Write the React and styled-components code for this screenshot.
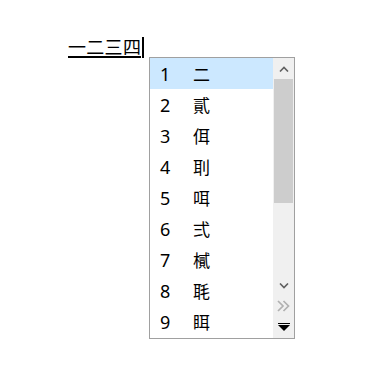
import React from 'react';
import styled, { createGlobalStyle } from 'styled-components';

const Global = createGlobalStyle`
	html, body {
		margin: 0;
		padding: 0;
		background: #fff;
	}
	body {
		font-family: "Noto Sans CJK TC", "Liberation Sans", sans-serif;
	}
`;

const Page = styled.div`
	position: relative;
	width: 372px;
	height: 372px;
	padding: 37px 0 0 68px;
	box-sizing: border-box;
`;

const Composition = styled.div`
	display: flex;
	align-items: flex-start;
	height: 21px;
`;

const Typed = styled.span`
	display: inline-block;
	font-family: "Noto Sans CJK TC", sans-serif;
	font-size: 18px;
	line-height: 19px;
	height: 19px;
	color: #000;
	border-bottom: 2px solid #000;
	letter-spacing: 0.3px;
`;

const Caret = styled.span`
	display: inline-block;
	width: 2px;
	height: 21px;
	margin-left: 1px;
	background: #000;
`;

const Candidates = styled.div`
	position: absolute;
	left: 149px;
	top: 57px;
	width: 146px;
	height: 282px;
	box-sizing: border-box;
	border: 1px solid #a0a0a0;
	background: #fff;
	display: flex;
`;

const List = styled.ul`
	list-style: none;
	margin: 0;
	padding: 0;
	width: 123px;
`;

const Row = styled.li`
	display: flex;
	align-items: center;
	height: 31px;
	padding-left: 10px;
	background: ${(p) => (p.$active ? '#cce8ff' : 'transparent')};
	color: #000;
`;

const Num = styled.span`
	width: 33px;
	font-family: "Noto Sans", "Liberation Sans", sans-serif;
	font-size: 18px;
	line-height: 20px;
`;

const Char = styled.span`
	font-family: "Noto Sans CJK TC", sans-serif;
	font-size: 17px;
	line-height: 20px;
`;

const Scroll = styled.div`
	width: 21px;
	display: flex;
	flex-direction: column;
	background: #f0f0f0;
`;

const Track = styled.div`
	height: 238px;
	display: flex;
	flex-direction: column;
`;

const Arrow = styled.div`
	height: 21px;
	display: flex;
	align-items: center;
	justify-content: center;
`;

const Thumb = styled.div`
	height: 124px;
	margin: 0 1px;
	background: #cdcdcd;
`;

const Gap = styled.div`
	flex: 1;
`;

const Extra = styled.div`
	height: ${(p) => p.$h}px;
	display: flex;
	align-items: center;
	justify-content: center;
`;

const chars = ['二', '貳', '佴', '刵', '咡', '弍', '樲', '毦', '眲'];

const Chevron = ({ up }) => (
	<svg width="10" height="6" viewBox="0 0 10 6">
		<path
			d={up ? 'M1 5.5 L5 1.5 L9 5.5' : 'M1 0.5 L5 4.5 L9 0.5'}
			fill="none"
			stroke="#606060"
			strokeWidth="1.6"
		/>
	</svg>
);

export default function App() {
	return (
		<Page>
			<Global />
			<Composition>
				<Typed>一二三四</Typed>
				<Caret />
			</Composition>
			<Candidates>
				<List>
					{chars.map((c, i) => (
						<Row key={c} $active={i === 0}>
							<Num>{i + 1}</Num>
							<Char>{c}</Char>
						</Row>
					))}
				</List>
				<Scroll>
					<Track>
						<Arrow>
							<Chevron up />
						</Arrow>
						<Thumb />
						<Gap />
						<Arrow>
							<Chevron />
						</Arrow>
					</Track>
					<Extra $h={20}>
						<svg width="13" height="12" viewBox="0 0 13 12">
							<path d="M1 1 L6 6 L1 11 M6.5 1 L11.5 6 L6.5 11" fill="none" stroke="#b0b0b0" strokeWidth="1.7" />
						</svg>
					</Extra>
					<Extra $h={22}>
						<svg width="12" height="8" viewBox="0 0 12 8">
							<rect x="0" y="0" width="12" height="1" fill="#000" />
							<path d="M0 2 L12 2 L6 8 Z" fill="#000" />
						</svg>
					</Extra>
				</Scroll>
			</Candidates>
		</Page>
	);
}
